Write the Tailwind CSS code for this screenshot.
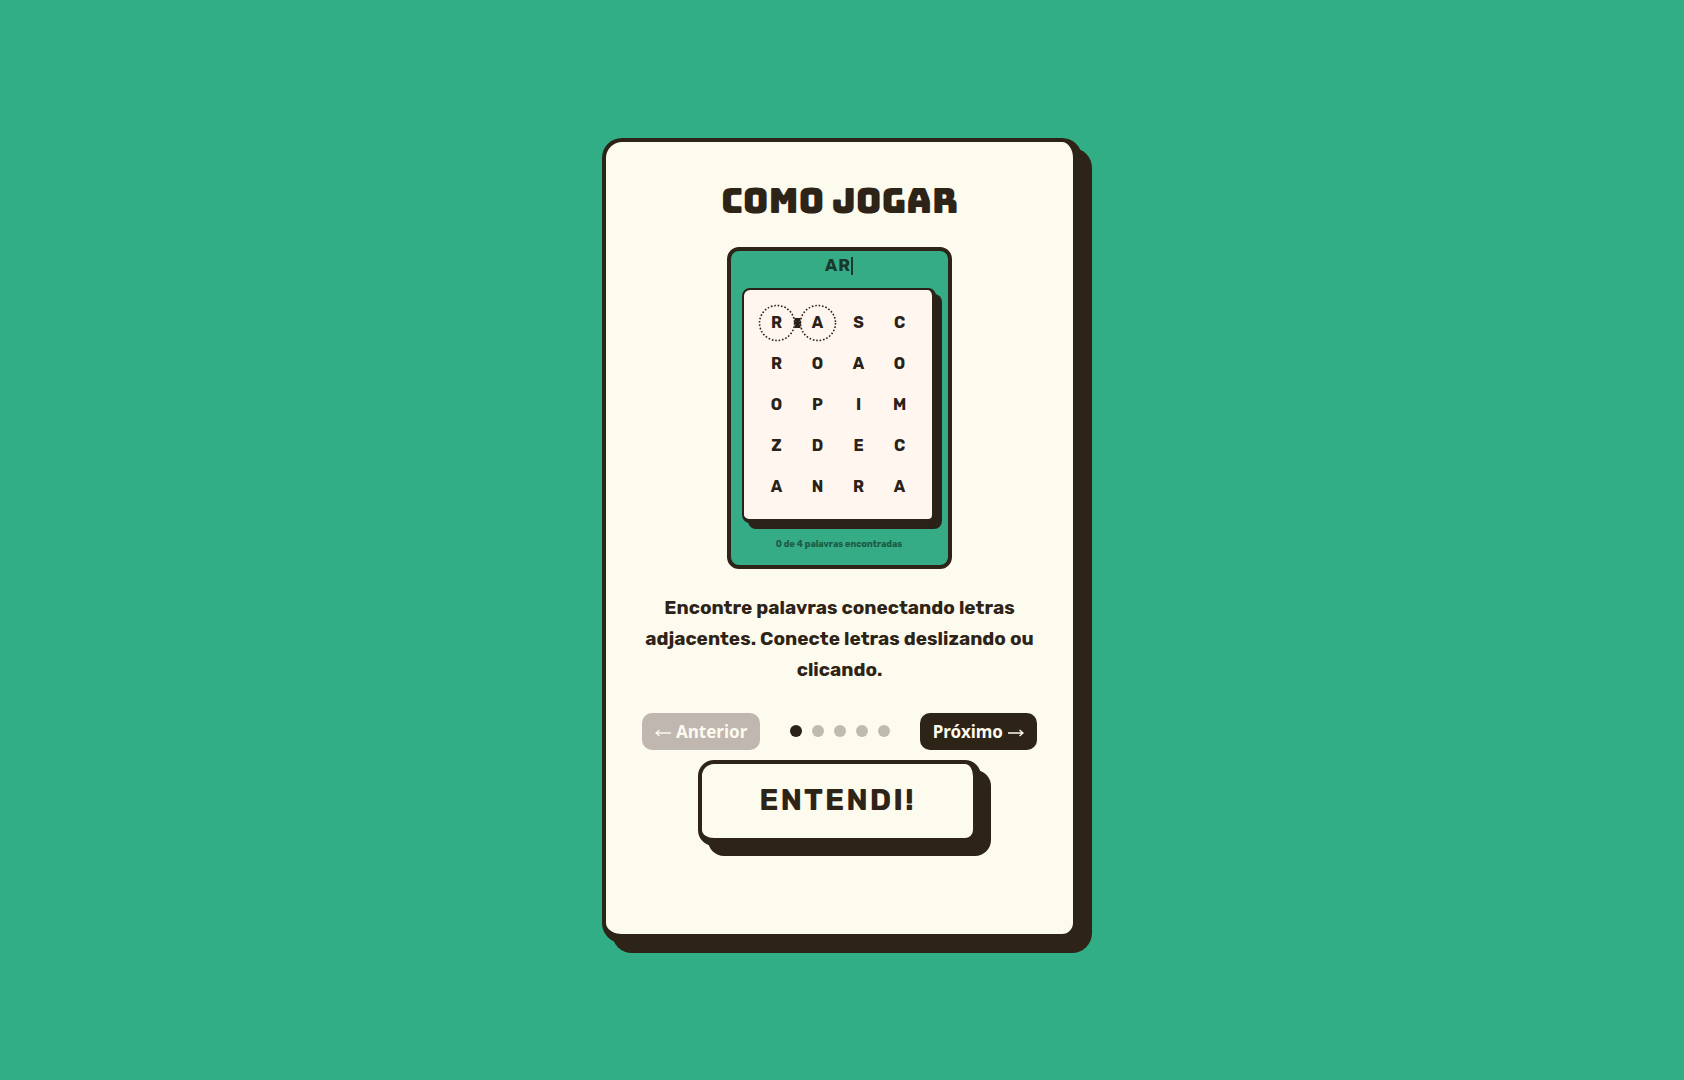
<!DOCTYPE html>
<html lang="pt-BR">
<head>
    <meta charset="utf-8">
    <meta name="viewport" content="width=device-width, initial-scale=1">
    <title>Como jogar</title>
    <script src="https://cdn.jsdelivr.net/npm/@tailwindcss/browser@4"></script>
</head>
<body class="min-h-screen bg-[#31ae86] text-[#2e2317] font-['Rubik','Inter',sans-serif] flex items-center justify-center">
    <main class="w-full max-w-[480px] bg-[#fdfaee] border-4 border-r-[9px] border-b-[9px] border-[#2e2317] rounded-[20px] shadow-[10px_10px_0_#2e2317] px-9 pt-9 pb-22 flex flex-col items-center">
        <h1 class="font-['Bungee','Rubik','Inter',sans-serif] text-[35px] leading-[46px] font-normal uppercase whitespace-nowrap">Como jogar</h1>

        <!-- demo board -->
        <div class="mt-[23px] w-[225px] border-4 border-[#2e2317] rounded-xl bg-[#35ab86] pl-[11px] pr-3 pb-3 flex flex-col">
            <div class="h-[37px] pb-1.5 flex items-center justify-center text-[17px] font-bold tracking-[1px] text-[#17382b]">
                <span>AR</span><span class="w-0.5 h-[18px] bg-[#17382b]"></span>
            </div>
            <div class="bg-[#fff6ef] border-2 border-r-4 border-b-4 border-[#2a2118] rounded-lg shadow-[6px_6px_0_#2a2118] px-3 pt-[13px] pb-[11px] grid grid-cols-4 auto-rows-[41px] items-center justify-items-center text-[16px] font-bold text-[#2a2118]">
                <span class="relative size-9 flex items-center justify-center">R
                    <svg class="absolute inset-0 overflow-visible" width="36" height="36" viewBox="0 0 36 36" fill="none">
                        <circle cx="18" cy="18" r="17.5" stroke="#2a2118" stroke-width="1.6" stroke-dasharray="1.6 1.84"/>
                        <path d="M35.5 13h6v3h-1v4h1v3h-6v-3h1v-4h-1z" fill="#2a2118"/>
                        <path d="M35 18h7" stroke="#2a2118" stroke-width="3"/>
                    </svg>
                </span>
                <span class="relative size-9 flex items-center justify-center">A
                    <svg class="absolute inset-0 overflow-visible" width="36" height="36" viewBox="0 0 36 36" fill="none">
                        <circle cx="18" cy="18" r="17.5" stroke="#2a2118" stroke-width="1.6" stroke-dasharray="1.6 1.84"/>
                    </svg>
                </span>
                <span>S</span><span>C</span>
                <span>R</span><span>O</span><span>A</span><span>O</span>
                <span>O</span><span>P</span><span>I</span><span>M</span>
                <span>Z</span><span>D</span><span>E</span><span>C</span>
                <span>A</span><span>N</span><span>R</span><span>A</span>
            </div>
            <p class="mt-3 text-[9px] leading-[18px] font-bold text-center whitespace-nowrap text-[#1c5a44]">0 de 4 palavras encontradas</p>
        </div>

        <p class="mt-[23px] text-[19px] leading-[31px] font-bold text-center">Encontre palavras conectando letras adjacentes. Conecte letras deslizando ou clicando.</p>

        <div class="mt-7 w-full flex items-center justify-between font-['Noto_Sans',sans-serif] text-[17px] font-bold">
            <button type="button" disabled class="h-[37px] px-[13px] flex items-center gap-[5px] rounded-[10px] bg-[#c0b7b0] text-[#fdfaee] whitespace-nowrap">
                <svg class="mt-1" width="16" height="8" viewBox="0 0 16 8" fill="none" stroke="currentColor" stroke-width="1.3"><path d="M1 4h15M4.5 1L1 4l3.5 3"/></svg>
                <span class="pt-0.5">Anterior</span>
            </button>
            <div class="flex gap-2.5">
                <span class="size-3 rounded-full bg-[#2a2118]"></span>
                <span class="size-3 rounded-full bg-[#bfbbaf]"></span>
                <span class="size-3 rounded-full bg-[#bfbbaf]"></span>
                <span class="size-3 rounded-full bg-[#bfbbaf]"></span>
                <span class="size-3 rounded-full bg-[#bfbbaf]"></span>
            </div>
            <button type="button" class="h-[37px] px-[13px] flex items-center gap-[5px] rounded-[10px] bg-[#2e2317] text-[#fdfaee] whitespace-nowrap">
                <span class="pt-0.5">Próximo</span>
                <svg class="mt-1" width="16" height="8" viewBox="0 0 16 8" fill="none" stroke="currentColor" stroke-width="1.3"><path d="M0 4h15M11.5 1L15 4l-3.5 3"/></svg>
            </button>
        </div>

        <button type="button" class="mt-2.5 w-[283px] h-[86px] bg-[#fdfaee] border-4 border-r-8 border-b-8 border-[#2e2317] rounded-2xl shadow-[10px_10px_0_#2e2317] text-[30px] font-bold tracking-[2px]">ENTENDI!</button>
    </main>
</body>
</html>
